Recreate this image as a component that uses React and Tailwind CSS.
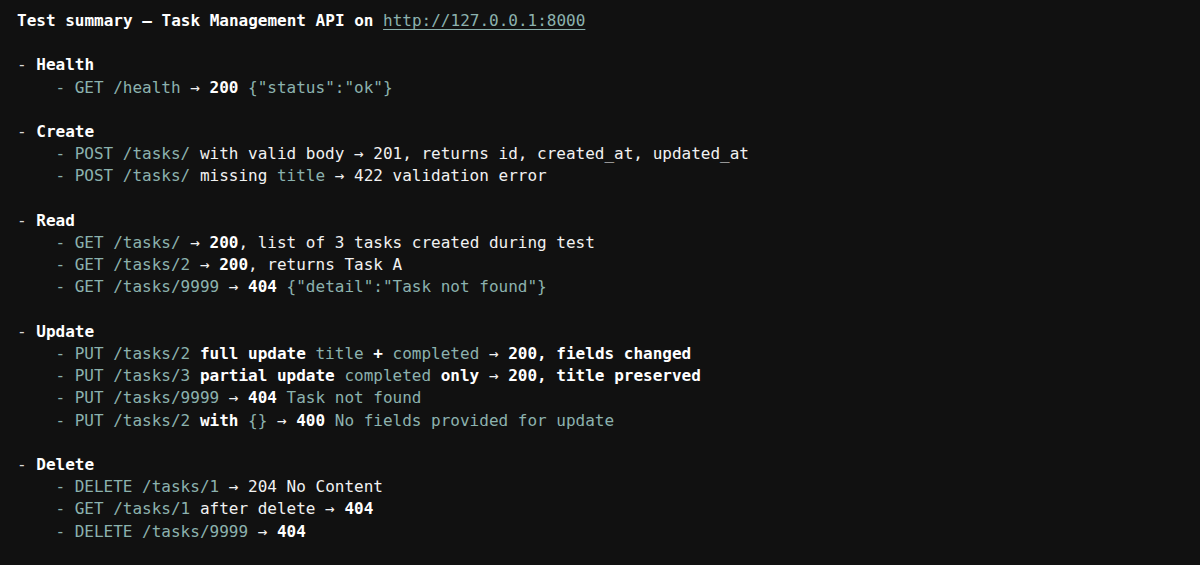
import React from "react";

const T = "t"; // teal
const W = "w"; // white
const B = "b"; // white bold

const sections = [
  {
    title: "Health",
    items: [
      [["GET /health", T], [" → ", W], ["200", B], [" {\"status\":\"ok\"}", T]],
    ],
  },
  {
    title: "Create",
    items: [
      [["POST /tasks/", T], [" with valid body → 201, returns id, created_at, updated_at", W]],
      [["POST /tasks/", T], [" missing ", W], ["title", T], [" → 422 validation error", W]],
    ],
  },
  {
    title: "Read",
    items: [
      [["GET /tasks/", T], [" → ", W], ["200", B], [", list of 3 tasks created during test", W]],
      [["GET /tasks/2", T], [" → ", W], ["200", B], [", returns Task A", W]],
      [["GET /tasks/9999", T], [" → ", W], ["404", B], [" {\"detail\":\"Task not found\"}", T]],
    ],
  },
  {
    title: "Update",
    items: [
      [["PUT /tasks/2", T], [" full update ", B], ["title", T], [" + ", B], ["completed", T], [" → ", W], ["200", B], [", fields changed", B]],
      [["PUT /tasks/3", T], [" partial update ", B], ["completed", T], [" only", B], [" → ", W], ["200", B], [", title preserved", B]],
      [["PUT /tasks/9999", T], [" → ", W], ["404", B], [" Task not found", T]],
      [["PUT /tasks/2", T], [" with ", B], ["{}", T], [" → ", W], ["400", B], [" No fields provided for update", T]],
    ],
  },
  {
    title: "Delete",
    items: [
      [["DELETE /tasks/1", T], [" → ", W], ["204 No Content", W]],
      [["GET /tasks/1", T], [" after delete → ", W], ["404", B]],
      [["DELETE /tasks/9999", T], [" → ", W], ["404", B]],
    ],
  },
];

const cls = {
  t: "text-[#8cb2ae] font-normal",
  w: "text-[#f2f2f2] font-normal",
  b: "text-[#ffffff] font-bold",
};

function Seg({ s }) {
  return <span className={cls[s[1]]}>{s[0]}</span>;
}

export default function App() {
  return (
    <div
      className="w-[1200px] h-[565px] bg-[#111111] pl-[17px] pt-[10px] text-[16px] leading-[22.2px] whitespace-pre overflow-hidden"
      style={{ fontFamily: '"DejaVu Sans Mono", "Liberation Mono", monospace' }}
    >
      <div className="text-[#ffffff] font-bold">
        Test summary – Task Management API on{" "}
        <span className="text-[#8cb2ae] font-normal underline decoration-[#8cb2ae] underline-offset-[3px]">
          http://127.0.0.1:8000
        </span>
      </div>
      {sections.map((sec) => (
        <div key={sec.title} className="flex flex-col">
          <div>&nbsp;</div>
          <div>
            <span className="text-[#d8d8d8]">- </span>
            <span className="text-[#ffffff] font-semibold">{sec.title}</span>
          </div>
          {sec.items.map((line, i) => (
            <div key={i} className="pl-[38.4px]">
              <span className="text-[#8cb2ae]">- </span>
              {line.map((s, j) => (
                <Seg key={j} s={s} />
              ))}
            </div>
          ))}
        </div>
      ))}
    </div>
  );
}
